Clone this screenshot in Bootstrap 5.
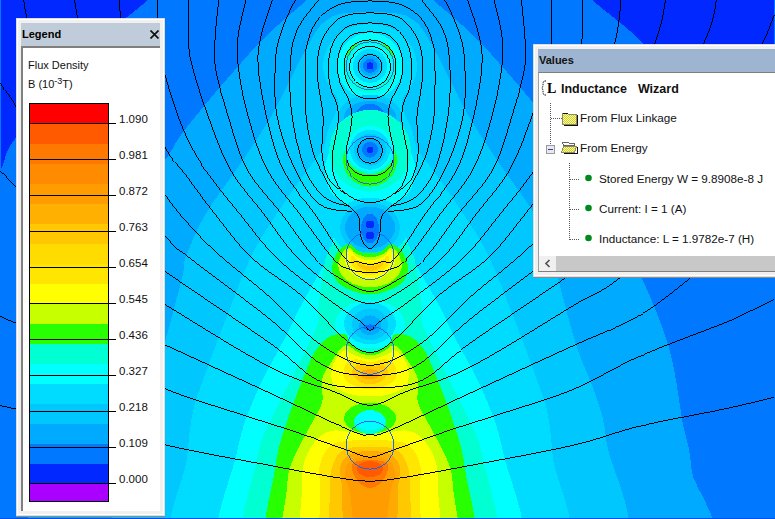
<!DOCTYPE html>
<html lang="en">
<head>
<meta charset="utf-8">
<title>Inductance Wizard</title>
<link href="https://cdn.jsdelivr.net/npm/bootstrap@5.3.0/dist/css/bootstrap.min.css" rel="stylesheet">
<style>
html,body{margin:0;width:775px;height:519px;overflow:hidden;background:#0078ff}
body{font-family:"Liberation Sans",Arial,sans-serif;font-size:11px;line-height:1;color:#000}
.stage{width:775px;height:519px;overflow:hidden}
.field{display:block;width:775px;height:519px;border-bottom:1px solid #0050f0}
.win{position:absolute;background:#f0f0f0;border:1px solid #fff;box-shadow:0 0 0 1px #dcdcdc,0 1px 0 1px #8c8c8c;padding:3px;border-radius:0}
.win-legend{left:17px;top:19px;width:147px;height:496px}
.win-values{left:534px;top:45px;width:270px;height:231px}
.win-head{height:23px;padding:0 1px;font-weight:700;font-size:11px}
.win-legend .win-head{background:#c0ccd9}
.win-values .win-head{background:#9db5d0;color:#111}
.win-body{background:#fff;border-top:2px solid #7f7f7f;border-left:2px solid #7f7f7f;min-height:0}
.win-legend .win-body{padding-left:6px}
.win-values .win-body{border-left:1px solid #a0a0a0;border-top:1px solid #7f7f7f;border-bottom:1px solid #7f7f7f}
.lg-name{height:19px;padding-top:12px;box-sizing:content-box;color:#111;margin-left:-1px}
.lg-unit{height:19px;color:#111;margin-left:-1px}
.lg-unit sup{font-size:9px;top:-.45em}
.scale-box{position:relative;margin-top:5px;width:130px;height:399px}
.bar-col{width:80px;height:399px;border:1px solid #000;display:flex;flex-direction:column}
.bar-col div{flex:0 0 20px}
.bar-col div:last-child{flex:1 1 auto}
.t-lines{position:absolute;left:0;top:21px;width:130px;margin:0;padding:0;list-style:none}
.t-lines li{height:36px;position:relative}
.t-lines li::before{content:"";position:absolute;left:0;width:87px;bottom:0;border-bottom:1px solid #000;height:0}
.t-lines li span{position:absolute;left:90px;bottom:-1px;font-size:11.5px;height:12px;line-height:12px;color:#111}
.t-lines li.t-first{height:0}
.tree-row{position:absolute;display:flex;align-items:center;height:16px;font-size:11.7px;color:#111;white-space:nowrap}
.tree-wrap{position:relative;height:182px}
.tree-title{font-weight:700;font-size:12.5px;word-spacing:2px}
.r-title{left:22px;top:8px}
.r-a{left:41px;top:37px}
.r-b{left:41px;top:67px}
.r-c{left:60px;top:98px}
.r-d{left:60px;top:128px}
.r-e{left:60px;top:158px}
.sb-line{height:15px;background:#c8c8c8}
.sb-btn{width:17px;height:15px;background:#f0f0f0}
.close-x{line-height:0}
</style>
</head>
<body>
<main class="stage position-relative">
<svg class="field" id="fld" viewBox="0 0 775 519" xmlns="http://www.w3.org/2000/svg" shape-rendering="crispEdges"></svg>

<section class="win win-legend d-flex flex-column">
  <header class="win-head d-flex align-items-center justify-content-between">
    <span>Legend</span>
    <svg class="close-x" width="9" height="9" viewBox="0 0 9 9"><path d="M.5.5l8 8M8.5.5l-8 8" stroke="#111" stroke-width="1.700" fill="none"/></svg>
  </header>
  <div class="win-body flex-grow-1">
    <div class="lg-name">Flux Density</div>
    <div class="lg-unit">B (10<sup>-3</sup>T)</div>
    <div class="scale-box">
      <div class="bar-col" id="bar"></div>
      <ul class="t-lines" id="ticks"></ul>
    </div>
  </div>
</section>

<section class="win win-values d-flex flex-column">
  <header class="win-head d-flex align-items-center"><span>Values</span></header>
  <div class="win-body flex-grow-1 d-flex flex-column">
    <div class="tree-wrap flex-grow-1">
      <svg class="position-absolute top-0 start-0" width="250" height="182" viewBox="539 73 250 182" shape-rendering="crispEdges">
        <defs>
          <pattern id="dith" width="2" height="2" patternUnits="userSpaceOnUse"><rect width="2" height="2" fill="#ffff70"/><rect width="1" height="1" fill="#c8c860"/><rect x="1" y="1" width="1" height="1" fill="#c8c860"/></pattern>
        </defs>
        <g stroke="#555" stroke-dasharray="1 1" fill="none">
          <path d="M550.500 103V145M551 118.500H562M569.500 163V240M570 179.500H580M570 209.500H580M570 239.500H580"/>
        </g>
        <rect x="546.500" y="145.500" width="8" height="8" fill="#e8e8ee" stroke="#9a9a9a"/>
        <path d="M548 149.500h5" stroke="#3040a0"/>
        <path d="M562.500 113.500h5l1 1h7.500v10h-13.500z" fill="url(#dith)" stroke="#8a8a60"/>
        <path d="M563 113h5M577 115v11M564 125.500h13" stroke="#111" fill="none"/>
        <path d="M562.500 142.500h6l1 1h5v2h-11z" fill="#fff" stroke="#666"/>
        <path d="M563.500 146.500h13l-2 6h-13z" fill="url(#dith)" stroke="#8a8a60"/>
        <path d="M564 153.500h13l1-6" stroke="#111" fill="none"/>
        <g fill="#008a1e" shape-rendering="auto"><circle cx="588.500" cy="178" r="3.300"/><circle cx="588.500" cy="208" r="3.300"/><circle cx="588.500" cy="238" r="3.300"/></g>
        <path d="M546 81h-2l-1 2v3l-1 2 1 2v3l1 2h2" stroke="#111" stroke-dasharray="1.500 1" fill="none" shape-rendering="auto"/>
        <text x="547" y="93" font-family="Liberation Serif" font-weight="700" font-size="14" shape-rendering="auto">L</text>
      </svg>
      <div class="tree-row tree-title r-title">Inductance&nbsp; Wizard</div>
      <div class="tree-row r-a">From Flux Linkage</div>
      <div class="tree-row r-b">From Energy</div>
      <div class="tree-row r-c">Stored Energy W = 9.8908e-8 J</div>
      <div class="tree-row r-d">Current: I = 1 (A)</div>
      <div class="tree-row r-e">Inductance: L = 1.9782e-7 (H)</div>
    </div>
    <div class="d-flex sb-line">
      <div class="sb-btn d-flex align-items-center justify-content-center">
        <svg width="7" height="9" viewBox="0 0 7 9"><path d="M5.500 1L2 4.500 5.500 8" stroke="#555" stroke-width="1.700" fill="none"/></svg>
      </div>
    </div>
  </div>
</section>
</main>
<script>
(function(){
var A=370,NS="http://www.w3.org/2000/svg",svg=document.getElementById('fld');
function full(h){var p=h.slice();for(var i=h.length-1;i>=0;i--){if(h[i][0]!==A)p.push([2*A-h[i][0],h[i][1]]);}return p;}
function sm(p,closed){var n=p.length,d='M'+p[0][0]+' '+p[0][1],m=closed?n:n-1;
 for(var i=0;i<m;i++){
  var p0=closed?p[(i-1+n)%n]:p[Math.max(i-1,0)],p1=p[i],p2=p[(i+1)%n],p3=closed?p[(i+2)%n]:p[Math.min(i+2,n-1)];
  var k=6;
  d+='C'+(p1[0]+(p2[0]-p0[0])/k).toFixed(1)+' '+(p1[1]+(p2[1]-p0[1])/k).toFixed(1)+' '+(p2[0]-(p3[0]-p1[0])/k).toFixed(1)+' '+(p2[1]-(p3[1]-p1[1])/k).toFixed(1)+' '+p2[0]+' '+p2[1];
 }
 return d+(closed?'Z':'');}
function el(t,a){var e=document.createElementNS(NS,t);for(var k in a)e.setAttribute(k,a[k]);svg.appendChild(e);return e;}
function P(c,h){el('path',{d:sm(full(h),true),fill:c});}
function E(c,cy,rx,ry){el('ellipse',{cx:A,cy:cy,rx:rx,ry:ry||rx,fill:c});}
var DB='#0028ff',B='#0078ff',B2='#00aaff',B3='#00c8ff',B4='#00dcff',C='#00ffff',Q='#00ffd2',G='#28ff00',YG='#c8ff00',Y='#ffff00',Y2='#ffe600',Y3='#ffc800',O1='#ffaa00',O2='#ff9c00',O3='#ff7800',O4='#ff5a00';
el('rect',{x:0,y:0,width:775,height:519,fill:DB});
P(B,[[370,-30],[170,-30],[147,0],[95,45],[16,137],[0,170],[-35,240],[-45,560],[370,560]]);
P(B2,[[370,-30],[330,-30],[306,0],[287,17],[260,42],[220,87],[183,132],[167,157],[140,195],[98,278],[70,350],[57,422],[48,470],[48,560],[370,560]]);
P(B3,[[370,12],[340,14],[327,20],[317,30],[300,60],[273,113],[243,160],[205,215],[185,259],[182,277],[163,347],[145,393],[133,443],[127,560],[370,560]]);
P(B4,[[370,24],[345,30],[328,47],[323,67],[328,85],[338,100],[336,112],[328,130],[322,150],[300,180],[263,235],[245,270],[232,303],[215,347],[202,383],[193,410],[187,457],[181,560],[370,560]]);
P(C,[[370,128],[340,138],[325,165],[330,192],[345,205],[337,225],[327,259],[303,302],[283,342],[257,392],[237,452],[224,560],[370,560]]);
P(Q,[[370,236],[340,238],[327,255],[322,280],[318,310],[317,326],[293,376],[273,416],[257,459],[248,560],[370,560]]);
E(C,66,33);E(Q,66,27);
el('path',{d:'M347 57A25 25 0 0 1 357 44',stroke:G,'stroke-width':2,fill:'none'});
el('path',{d:'M393 57A25 25 0 0 0 383 44',stroke:G,'stroke-width':2,fill:'none'});
E(C,66,22);E(B4,66,17);E(B3,66,13);E(B2,66,10);E(B,66,7);E(DB,66,3.5);
E(B3,117,32,22);E(B2,117,26,16);E(B,117,15,13);E(DB,117,7,6.5);
E(Q,151,41,41);E(G,160,27);
E(Q,149,25.5);E(C,149,23);E(B4,150,20);E(B3,150,16);E(B2,150,12);E(B,150,8);E(DB,150,3.2);
E(B4,228,38,30);E(B3,228,30,25);E(B2,228,25,21);E(B,229,9,15);E(DB,225,4.5,4);E(DB,236,4.5,4);
P(G,[[370,295],[352,291],[338,283],[332,270],[336,255],[345,246],[351,245],[356,250],[362,253],[370,254]]);
P(YG,[[370,288],[352,284],[342,276],[338,266],[342,254],[349,248],[356,254],[370,258]]);
P(Y,[[370,281],[356,277],[347,268],[345,258],[350,250],[356,257],[370,261]]);
P(Y2,[[370,276],[358,272],[351,264],[352,256],[358,261],[370,264]]);
P(Y3,[[370,272],[360,268],[356,262],[362,265],[370,267]]);
E(C,325,35,24);E(B4,324,26,21);E(B3,325,18,16);E(B2,326,11,10);E(B,328,6,3);
P(G,[[370,353],[358,350],[350,343],[345,335],[330,337],[317,349],[307,369],[288,419],[275,469],[270,560],[370,560]]);
P(YG,[[370,356],[358,353],[345,346],[333,360],[322,380],[322,403],[310,427],[293,460],[287,487],[287,560],[370,560]]);
P(Y,[[370,360],[352,355],[345,351],[333,365],[333,385],[350,395],[370,397]]);
P(Y2,[[370,363],[355,360],[345,366],[345,380],[358,388],[370,390]]);
P(Y3,[[370,367],[357,366],[352,374],[360,383],[370,385]]);
P(O1,[[370,370],[362,372],[362,378],[370,380]]);
P(Y,[[370,436],[345,432],[330,432],[317,440],[305,460],[302,487],[305,560],[370,560]]);
P(Y2,[[370,441],[345,442],[330,447],[320,465],[320,490],[324,560],[370,560]]);
P(Y3,[[370,448],[345,450],[333,465],[330,490],[332,560],[370,560]]);
P(O1,[[370,452],[350,455],[340,468],[342,490],[346,560],[370,560]]);
P(O2,[[370,458],[350,462],[345,478],[350,495],[358,560],[370,560]]);
P(O3,[[370,461],[353,464],[354,476],[362,486],[370,489]]);
E(O4,470,13,8);
E(YG,416,30,18);E(G,419,26,15.5);E(Q,423,16,12);E(C,421,15,10);
var LN='#000';
function line(h,closed){el('path',{d:sm(full(h),!!closed),fill:'none',stroke:LN,'stroke-width':1});}
el('circle',{cx:A,cy:66.5,r:12,fill:'none',stroke:LN});
el('circle',{cx:A,cy:67,r:20.5,fill:'none',stroke:LN});
el('circle',{cx:A,cy:151,r:12.5,fill:'none',stroke:LN});
line([[370,40],[355,44],[346,55],[344,67],[347,82],[356,95],[370,99]],true);
line([[370,32],[352,35],[341,47],[337,67],[341,85],[349,101],[352,117],[349,137],[346,152],[349,166],[358,174],[370,176]],true);
line([[370,23],[347,27],[333,43],[328,67],[331,90],[337,105],[338,122],[335,140],[332,158],[335,180],[350,197],[370,203]],true);
line([[345,194],[329,180],[322,155],[323,117],[319,90],[317,67],[322,40],[340,18],[370,13]]);
line([[370,1],[338,5],[316,22],[306,48],[305,67],[305,90],[306,117],[311,145],[318,165],[335,195],[352,209],[359,219],[360,232],[363,243],[370,249]],true);
line([[350,207],[325,198],[305,170],[292,117],[290,67],[297,30],[322,-5],[338,-30],[370,-40]]);
line([[352,212],[320,205],[295,170],[277,117],[275,67],[280,35],[298,-5],[330,-50],[370,-60]]);
line([[274,-5],[261,35],[258,67],[267,120],[283,170],[315,215],[345,259],[357,262],[370,265]]);
line([[247,-5],[238,35],[238,67],[248,117],[267,170],[300,215],[333,259],[350,270],[370,273]]);
line([[219,-5],[215,35],[215,67],[228,117],[247,170],[282,215],[315,259],[340,279],[370,292]]);
line([[188,-5],[188,40],[192,67],[208,117],[230,170],[264,215],[298,259],[340,292],[370,304]]);
line([[157,-5],[158,44],[166,80],[183,130],[205,170],[240,215],[277,259],[327,299],[360,322],[370,331]]);
line([[118,-5],[125,44],[150,110],[166,150],[185,175],[215,215],[252,259],[300,295],[345,340],[370,353]]);
line([[73,-5],[85,44],[130,140],[166,197],[195,232],[223,259],[270,298],[320,345],[370,366]]);
line([[22,-5],[36,44],[100,160],[166,238],[190,259],[270,320],[323,366],[370,376]]);
line([[-35,15],[-23,44],[0,84],[16,108],[60,190],[120,240],[172,277],[270,344],[320,382],[370,388]]);
line([[-60,130],[0,172],[16,188],[118,277],[166,306],[270,368],[333,392],[370,406]]);
line([[47,277],[100,316],[170,348],[270,394],[352,432],[370,435]]);
line([[-35,300],[0,317],[16,324],[100,357],[166,390],[237,414],[293,432],[347,451],[370,458]]);
line([[-35,398],[16,410],[100,427],[166,446],[273,467],[340,479],[370,482]]);
[[66,24],[160.5,24],[256,24],[351,24],[446,24]].forEach(function(c){el('circle',{cx:A,cy:c[0],r:c[1],fill:'none',stroke:'#1e64f0'});});
var cols=['#ff0000','#ff5a00','#ff7800','#ff8c00','#ff9c00','#ffb000','#ffc800','#ffdc00','#ffe600','#ffff00','#c8ff00','#28ff00','#00ffd2','#00ffff','#00dcff','#00c8ff','#00aaff','#0078ff','#0028ff','#aa00ff'];
var bar=document.getElementById('bar');cols.forEach(function(c){var d=document.createElement('div');d.style.background=c;bar.appendChild(d);});
var vals=['1.090','0.981','0.872','0.763','0.654','0.545','0.436','0.327','0.218','0.109','0.000'];
var tk=document.getElementById('ticks');vals.forEach(function(v,i){var li=document.createElement('li');if(i==0)li.className='t-first';li.innerHTML='<span>'+v+'</span>';tk.appendChild(li);});
})();
</script>
</body>
</html>
